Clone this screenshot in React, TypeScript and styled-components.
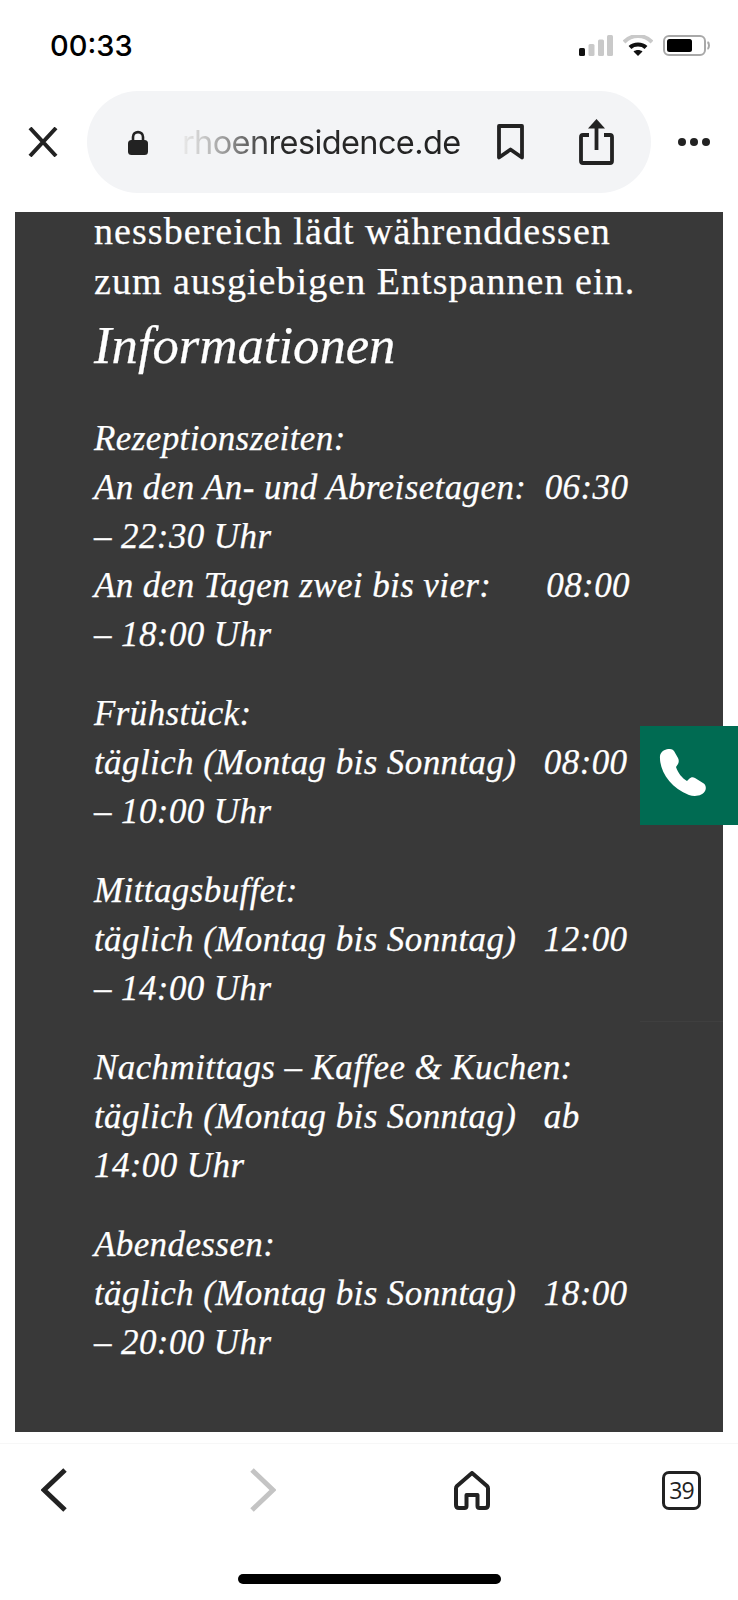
import React from "react"
import styled, { createGlobalStyle } from "styled-components"

const GlobalStyle = createGlobalStyle`
  html, body {
    margin: 0;
    padding: 0;
    background: #fff;
  }
`

const Screen = styled.div`
  position: relative;
  display: flex;
  flex-direction: column;
  width: 738px;
  height: 1600px;
  overflow: hidden;
  background: #fff;
`

const StatusBar = styled.div`
  display: flex;
  align-items: center;
  justify-content: space-between;
  height: 91px;
  padding: 0 28px 0 50px;
  box-sizing: border-box;
`

const Time = styled.span`
  font-family: Inter, "Liberation Sans", sans-serif;
  font-size: 29px;
  font-weight: 500;
  color: #000;
`

const StatusIcons = styled.div`
  display: flex;
  align-items: center;
  gap: 10px;
`

const UrlRow = styled.div`
  display: flex;
  align-items: center;
  height: 102px;
  padding-left: 28px;
`

const CloseButton = styled.div`
  display: flex;
  width: 30px;
  margin-right: 29px;
`

const UrlPill = styled.div`
  display: flex;
  align-items: center;
  width: 564px;
  height: 102px;
  padding-left: 41px;
  box-sizing: border-box;
  border-radius: 51px;
  background: #f3f4f6;
`

const UrlText = styled.span`
  flex: none;
  margin-left: 34px;
  margin-right: 36px;
  font-family: Inter, "Liberation Sans", sans-serif;
  font-size: 32.5px;
  letter-spacing: -0.62px;
  white-space: nowrap;
  background: linear-gradient(90deg, #eaeaea 0, #c4c4c4 24px, #8a8a8a 50px, #2a2a2a 90px, #222 100%);
  -webkit-background-clip: text;
  background-clip: text;
  color: transparent;
`

const ShareIcon = styled.div`
  display: flex;
  margin-left: 55px;
`

const MoreDots = styled.div`
  display: flex;
  gap: 4px;
  margin-left: 27px;
`

const Dot = styled.span`
  width: 8px;
  height: 8px;
  border-radius: 50%;
  background: #222;
`

const Panel = styled.main`
  height: 1220px;
  margin: 19px 15px 0;
  padding-left: 79px;
  background: #393939;
  color: #fff;
  font-family: "Liberation Serif", serif;
  -webkit-text-stroke: 0.25px #fff;
`

const Lead = styled.div`
  display: flex;
  flex-direction: column;
  gap: 12px;
`

const LeadLine = styled.p`
  margin: 0;
  font-size: 38px;
  line-height: 38px;
  letter-spacing: 1.05px;
  white-space: pre;
`

const Heading = styled.h2`
  margin: 19px 0 43px;
  font-size: 52.7px;
  font-style: italic;
  font-weight: 400;
  line-height: 52px;
  white-space: pre;
`

const Block = styled.p`
  margin: 0 0 30px;
  font-size: 35px;
  font-style: italic;
  line-height: 49px;
  letter-spacing: 0.4px;
  white-space: pre;
`

const CallButton = styled.div`
  position: absolute;
  top: 726px;
  right: 0;
  display: flex;
  align-items: center;
  justify-content: center;
  width: 98px;
  height: 99px;
  padding: 0 13px 7px 0;
  box-sizing: border-box;
  background: #006b52;
`

const CallButtonEdge = styled.div`
  position: absolute;
  top: 1021px;
  right: 0;
  width: 98px;
  height: 1px;
  background: rgba(255, 255, 255, 0.03);
`

const BottomBar = styled.nav`
  display: flex;
  gap: 139px;
  align-items: center;
  height: 92px;
  margin-top: 11px;
  padding: 0 0 8px 19px;
  border-top: 1px solid #f7f7f7;
`

const NavItem = styled.div`
  display: flex;
  align-items: center;
  justify-content: center;
  width: 70px;
`

const TabCount = styled.div`
  display: flex;
  align-items: center;
  justify-content: center;
  width: 39px;
  height: 39px;
  margin-left: 1px;
  box-sizing: border-box;
  border: 3.5px solid #222;
  border-radius: 7px;
  font-family: "Open Sans", sans-serif;
  font-size: 23px;
  letter-spacing: -0.8px;
  color: #222;
`

const HomeIndicator = styled.div`
  width: 263px;
  height: 10px;
  margin: 30px auto 0;
  border-radius: 5px;
  background: #000;
`

const SignalIcon = () => (
  <svg width="34" height="21" viewBox="0 0 34 21">
    <rect x="0" y="13" width="6" height="8" rx="1.5" fill="#111" />
    <rect x="9.5" y="9" width="6" height="12" rx="1.5" fill="#c9c9c9" />
    <rect x="19" y="4.5" width="6" height="16.5" rx="1.5" fill="#c9c9c9" />
    <rect x="28" y="0" width="6" height="21" rx="1.5" fill="#c9c9c9" />
  </svg>
)

const WifiIcon = () => (
  <svg width="30" height="21" viewBox="0 0 30 21">
    <path d="M1 7 C9 -1 21 -1 29 7" fill="none" stroke="#c9c9c9" strokeWidth="4" />
    <path d="M7 12.5 C11 8.5 19 8.5 23 12.5" fill="none" stroke="#111" strokeWidth="4" />
    <path d="M15 21 L10.5 16.5 C13 14.5 17 14.5 19.5 16.5 Z" fill="#111" />
  </svg>
)

const BatteryIcon = () => (
  <svg width="47" height="21" viewBox="0 0 47 21">
    <rect x="1" y="1" width="41" height="19" rx="5" fill="none" stroke="#a8a8a8" strokeWidth="2" />
    <rect x="4" y="4" width="25" height="13" rx="2.5" fill="#000" />
    <path d="M44.5 7 C46.5 8 46.5 13 44.5 14" fill="none" stroke="#a8a8a8" strokeWidth="2" />
  </svg>
)

const CloseIcon = () => (
  <svg width="30" height="30" viewBox="0 0 30 30">
    <path d="M2 1 L28 29 M28 1 L2 29" stroke="#222" strokeWidth="4" fill="none" />
  </svg>
)

const LockIcon = () => (
  <svg width="20" height="25" viewBox="0 0 20 25">
    <path d="M5 11 V7 C5 0.5 15 0.5 15 7 V11" fill="none" stroke="#222" strokeWidth="2.6" />
    <rect x="0" y="10" width="20" height="15" rx="3.5" fill="#222" />
  </svg>
)

const BookmarkIcon = () => (
  <svg width="27" height="36" viewBox="0 0 27 36">
    <path d="M2 2 H25 V33.5 L13.5 25.5 L2 33.5 Z" fill="none" stroke="#222" strokeWidth="3.8" strokeLinejoin="round" />
  </svg>
)

const ShareGlyph = () => (
  <svg width="35" height="46" viewBox="0 0 35 46">
    <path d="M10 16 H4 C2.8 16 2 16.8 2 18 V42 C2 43.2 2.8 44 4 44 H31 C32.2 44 33 43.2 33 42 V18 C33 16.8 32.2 16 31 16 H25" fill="none" stroke="#222" strokeWidth="3.8" />
    <path d="M17.5 3 V31" stroke="#222" strokeWidth="3.8" fill="none" />
    <path d="M17.5 0 L26 9.5 H9 Z" fill="#222" />
  </svg>
)

const Chevron = ({ flip, color }: { flip?: boolean; color: string }) => (
  <svg width="26" height="44" viewBox="0 0 26 44">
    <path
      d={flip ? "M2 2 L23 22 L2 42" : "M24 2 L3 22 L24 42"}
      fill="none"
      stroke={color}
      strokeWidth="5"
    />
  </svg>
)

const HomeIcon = () => (
  <svg width="36" height="39" viewBox="0 0 36 39">
    <path
      d="M18 2 L33 15 C33.8 15.8 34 16.5 34 17.5 V34 C34 35.8 33 37 31 37 H25.5 C24.3 37 23.5 36.2 23.5 35 V24 H12.5 V35 C12.5 36.2 11.7 37 10.5 37 H5 C3 37 2 35.8 2 34 V17.5 C2 16.5 2.2 15.8 3 15 Z"
      fill="none"
      stroke="#222"
      strokeWidth="4"
      strokeLinejoin="round"
    />
  </svg>
)

const PhoneIcon = () => (
  <svg width="47" height="47" viewBox="0 0 47 47">
    <path d="M1 7 C0 21 11 39 30 46 C36 48 44 47 46.5 41 C47.5 37.5 46 35 44 34 L36 29 C34 28 32 28 30 30 L28 32 C23 29 19 24 17 18 L19 15 C20 13 20 11 19 9 L15 2 C12 -2 2 0 1 7 Z" fill="#fff" />
  </svg>
)

const blocks = [
  "Rezeptionszeiten:\nAn den An- und Abreisetagen:  06:30\n– 22:30 Uhr\nAn den Tagen zwei bis vier:      08:00\n– 18:00 Uhr",
  "Frühstück:\ntäglich (Montag bis Sonntag)   08:00\n– 10:00 Uhr",
  "Mittagsbuffet:\ntäglich (Montag bis Sonntag)   12:00\n– 14:00 Uhr",
  "Nachmittags – Kaffee & Kuchen:\ntäglich (Montag bis Sonntag)   ab\n14:00 Uhr",
  "Abendessen:\ntäglich (Montag bis Sonntag)   18:00\n– 20:00 Uhr",
]

const App = () => {
  return (
    <Screen>
      <GlobalStyle />
      <StatusBar>
        <Time>00:33</Time>
        <StatusIcons>
          <SignalIcon />
          <WifiIcon />
          <BatteryIcon />
        </StatusIcons>
      </StatusBar>
      <UrlRow>
        <CloseButton>
          <CloseIcon />
        </CloseButton>
        <UrlPill>
          <LockIcon />
          <UrlText>rhoenresidence.de</UrlText>
          <BookmarkIcon />
          <ShareIcon>
            <ShareGlyph />
          </ShareIcon>
        </UrlPill>
        <MoreDots>
          <Dot />
          <Dot />
          <Dot />
        </MoreDots>
      </UrlRow>
      <Panel>
        <Lead>
          <LeadLine>nessbereich lädt währenddessen</LeadLine>
          <LeadLine>zum ausgiebigen Entspannen ein.</LeadLine>
        </Lead>
        <Heading>Informationen</Heading>
        {blocks.map((text) => (
          <Block key={text}>{text}</Block>
        ))}
      </Panel>
      <CallButton>
        <PhoneIcon />
      </CallButton>
      <CallButtonEdge />
      <BottomBar>
        <NavItem>
          <Chevron color="#222" />
        </NavItem>
        <NavItem>
          <Chevron flip color="#c4c4c4" />
        </NavItem>
        <NavItem>
          <HomeIcon />
        </NavItem>
        <NavItem>
          <TabCount>39</TabCount>
        </NavItem>
      </BottomBar>
      <HomeIndicator />
    </Screen>
  )
}

export default App
